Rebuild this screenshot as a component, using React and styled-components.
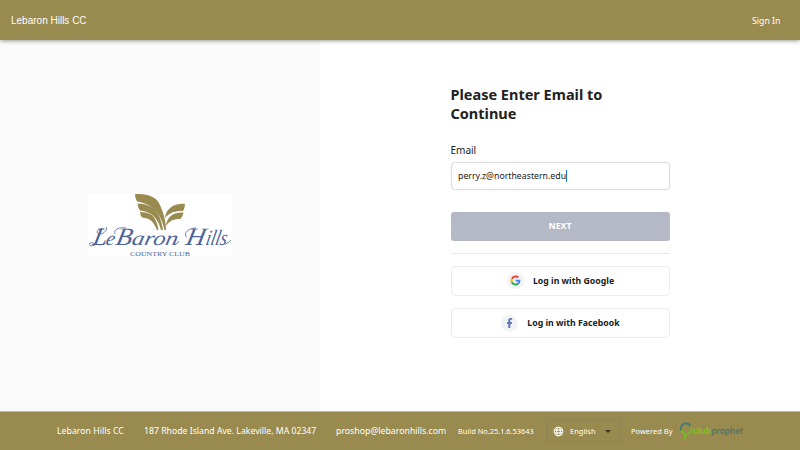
import React from "react";
import styled, { createGlobalStyle } from "styled-components";

const GlobalStyle = createGlobalStyle`
  * { box-sizing: border-box; }
  body { margin: 0; background: #fff; }
  body, button, input { font-family: "Noto Sans", sans-serif; }
`;

const Page = styled.div`
  width: 800px;
  height: 450px;
  display: flex;
  flex-direction: column;
  overflow: hidden;
  color: #212121;
`;

const Header = styled.header`
  flex: 0 0 40px;
  display: flex;
  align-items: center;
  justify-content: space-between;
  padding: 0 19.5px 0 11px;
  background: #998a50;
  color: #fff;
  box-shadow: 0 1px 4px rgba(0, 0, 0, 0.4);
  z-index: 1;
`;

const ClubTitle = styled.div`
  font: 10px/14px "Liberation Sans", sans-serif;
  padding-top: 1px;
`;

const SignIn = styled.a`
  font-size: 8.75px;
  line-height: 14px;
  padding-top: 2px;
`;

const Main = styled.main`
  flex: 1;
  display: flex;
`;

const BrandPanel = styled.section`
  width: 320px;
  background: #fafafa;
  padding: 154px 0 0 88px;
`;

const ClubLogo = styled.svg`
  display: block;
  width: 144px;
  height: 62px;
  background: #fff;
`;

const FormPanel = styled.section`
  flex: 1;
  padding: 45px 0 0 130.5px;
`;

const Form = styled.div`
  width: 219px;
  display: flex;
  flex-direction: column;
`;

const Heading = styled.h1`
  margin: 0;
  font-size: 14.5px;
  line-height: 19px;
  font-weight: 700;
  width: 180px;
`;

const Label = styled.label`
  margin-top: 19.5px;
  font-size: 10px;
  line-height: 14px;
`;

const Field = styled.div`
  margin-top: 5px;
  height: 28px;
  display: flex;
  align-items: center;
  padding: 0 6.5px;
  border: 1px solid #dcdcdc;
  box-shadow: 0 0 1px #d4d4d4;
  border-radius: 4px;
  font-size: 8.75px;
`;

const Caret = styled.span`
  width: 1px;
  height: 12px;
  background: #1976d2;
`;

const NextButton = styled.button`
  margin-top: 22px;
  height: 29px;
  padding: 0;
  border: 0;
  border-radius: 3px;
  background: #b5b9c6;
  color: #fff;
  font-size: 8.75px;
  font-weight: 700;
`;

const Divider = styled.hr`
  width: 100%;
  height: 1px;
  margin: 12px 0;
  border: 0;
  background: #e9e9eb;
`;

const SocialButton = styled.button`
  height: 30px;
  margin-bottom: 12.5px;
  padding: 0 0 0 1px;
  display: flex;
  align-items: center;
  justify-content: center;
  gap: 9px;
  border: 1px solid #ececee;
  border-radius: 4px;
  background: #fff;
  color: #212121;
  font-size: 8.75px;
  font-weight: 700;
`;

const SocialIcon = styled.svg`
  width: 17px;
  height: 17px;
`;

const Footer = styled.footer`
  flex: 0 0 39px;
  display: flex;
  align-items: center;
  padding-left: 57px;
  border-top: 1px solid #c1b998;
  background: #998a50;
  color: #fff;
  white-space: nowrap;
`;

const FooterText = styled.span`
  width: ${(p) => p.$width}px;
  flex: none;
  font-size: ${(p) => p.$size || 8.75}px;
`;

const LanguageSelect = styled.div`
  width: 75px;
  height: 22px;
  margin-right: 10px;
  padding: 0 9px 0 6px;
  display: flex;
  align-items: center;
  border: 1px solid #908453;
  border-radius: 2px;
  font-size: 7.5px;
`;

const Globe = styled.svg`
  width: 11px;
  height: 11px;
  margin-right: 6px;
`;

const Arrow = styled.svg`
  width: 6px;
  height: 3px;
  margin-left: auto;
`;

const ProphetLogo = styled.svg`
  width: 64px;
  height: 18px;
`;

function LeBaronLogo() {
  return (
    <ClubLogo viewBox="0 0 144 62">
      <g fill="#998a50">
        <path d="M47 0C57 0 68 1 72 11C76 20 78 28 78 36H76.500C74 23 67 10 49 7.500Q47 5 47 0Z" />
        <path d="M49.500 9.500C60 10 66 13 69.500 19C73 25 74 30 75 36H73C70 25 65 18 52 16.500Q50 14 49.500 9.500Z" />
        <path d="M52 18C60 18.500 65 20 67.500 26C69.500 30 70 33 70.500 36H69C66 29 63 24 54 23.500Q52 21 52 18Z" />
        <path d="M97 10C87 9 78 14 77 24C82 18 87 17 95 17Q97 14 97 10Z" />
        <path d="M95.500 18.500C86 18 79 22 78 32C82 26 86 25 92.500 25Q95 22 95.500 18.500Z" />
      </g>
      <g fill="#4d6499" fontFamily="'Liberation Serif', serif">
        <g fontStyle="italic" transform="translate(0 51) skewX(-12)">
          <text x="4" y="0" fontSize="25" textLength="14" lengthAdjust="spacingAndGlyphs">L</text>
          <text x="17" y="0" fontSize="20" textLength="9" lengthAdjust="spacingAndGlyphs">e</text>
          <text x="27" y="0" fontSize="25" textLength="16" lengthAdjust="spacingAndGlyphs">B</text>
          <text x="43" y="0" fontSize="20" textLength="46" lengthAdjust="spacingAndGlyphs">aron</text>
          <text x="97" y="0" fontSize="25" textLength="19" lengthAdjust="spacingAndGlyphs">H</text>
          <text x="117" y="0" fontSize="22" textLength="21" lengthAdjust="spacingAndGlyphs">ills</text>
        </g>
        <text x="42" y="61.500" fontSize="7" textLength="60" lengthAdjust="spacingAndGlyphs">COUNTRY CLUB</text>
      </g>
      <g fill="none" stroke="#4d6499" strokeWidth=".8">
        <path d="M16 35C9 33 7 40 12 40S20 34 18 33M7 51C3 53 0 51 2 49C6 47 10 54 18 49M27 40C25 35 32 33 38 34M99 43C95 42 98 34 108 34M87 50Q90 50 91 47M137 50Q141 49 143 46" />
      </g>
    </ClubLogo>
  );
}

function GoogleIcon() {
  return (
    <SocialIcon viewBox="0 0 34 34">
      <circle cx="17" cy="17" r="17" fill="#f3f3f5" />
      <g transform="translate(7 7) scale(.42)">
        <path fill="#ea4335" d="M24 9.500c3.500 0 6.700 1.200 9.200 3.600l6.900-6.900C35.900 2.400 30.500 0 24 0 14.600 0 6.500 5.400 2.600 13.200l8 6.200C12.500 13.700 17.700 9.500 24 9.500z" />
        <path fill="#4285f4" d="M47 24.600c0-1.600-.2-3.100-.4-4.600H24v9h12.900c-.6 3-2.300 5.500-4.800 7.200l7.700 6C44.400 38 47 31.800 47 24.600z" />
        <path fill="#fbbc05" d="M10.500 28.600a14.500 14.500 0 0 1 0-9.200l-8-6.200a24 24 0 0 0 0 21.600z" />
        <path fill="#34a853" d="M24 48c6.500 0 11.900-2.100 15.900-5.800l-7.700-6c-2.200 1.500-4.900 2.300-8.200 2.300-6.300 0-11.600-4.200-13.500-9.900l-8 6.200C6.500 42.600 14.600 48 24 48z" />
      </g>
    </SocialIcon>
  );
}

function FacebookIcon() {
  return (
    <SocialIcon viewBox="0 0 34 34">
      <circle cx="17" cy="17" r="17" fill="#f3f3f5" />
      <path fill="#6078b8" d="M14.500 26v-8H12v-4h2.500v-3c0-3.500 2-5 5-5h2.800v3.700h-2c-1.300 0-1.600.7-1.600 1.800V14h3.500l-.6 4h-2.900v8z" />
    </SocialIcon>
  );
}

export default function App() {
  return (
    <>
      <GlobalStyle />
      <Page>
        <Header>
          <ClubTitle>Lebaron Hills CC</ClubTitle>
          <SignIn>Sign In</SignIn>
        </Header>
        <Main>
          <BrandPanel>
            <LeBaronLogo />
          </BrandPanel>
          <FormPanel>
            <Form>
              <Heading>Please Enter Email to Continue</Heading>
              <Label>Email</Label>
              <Field>
                perry.z@northeastern.edu
                <Caret />
              </Field>
              <NextButton>NEXT</NextButton>
              <Divider />
              <SocialButton>
                <GoogleIcon />
                Log in with Google
              </SocialButton>
              <SocialButton>
                <FacebookIcon />
                Log in with Facebook
              </SocialButton>
            </Form>
          </FormPanel>
        </Main>
        <Footer>
          <FooterText $width={87}>Lebaron Hills CC</FooterText>
          <FooterText $width={192} $size={8.7}>187 Rhode Island Ave. Lakeville, MA 02347</FooterText>
          <FooterText $width={122}>proshop@lebaronhills.com</FooterText>
          <FooterText $width={88} $size={7.4}>Build No.25.1.6.53643</FooterText>
          <LanguageSelect>
            <Globe viewBox="0 0 24 24" fill="none" stroke="#fff" strokeWidth="2.2">
              <circle cx="12" cy="12" r="9.500" />
              <ellipse cx="12" cy="12" rx="4" ry="9.500" />
              <path d="M4 9H20M4 15H20" />
            </Globe>
            English
            <Arrow viewBox="0 0 6 3">
              <path d="M0 0H6L3 3Z" fill="#40391f" />
            </Arrow>
          </LanguageSelect>
          <FooterText $width={49} $size={7.5}>Powered By</FooterText>
          <ProphetLogo viewBox="0 0 64 18">
            <path d="M1.500 9A5 5 0 0 1 10.500 4" fill="none" stroke="#467b72" strokeWidth="2" />
            <path d="M11 5A4.700 4.700 0 0 1 7 12L5 15V12Q2 11 1.500 8" fill="none" stroke="#79b52b" strokeWidth="2" />
            <g fontFamily="Inter, sans-serif" fontSize="8.500">
              <text x="13" y="11.500" fill="#83bd22" fontWeight="800" textLength="18" lengthAdjust="spacingAndGlyphs">club</text>
              <text x="31.500" y="11.500" fill="#4b7471" fontWeight="600" textLength="31.500" lengthAdjust="spacingAndGlyphs">prophet</text>
            </g>
          </ProphetLogo>
        </Footer>
      </Page>
    </>
  );
}
